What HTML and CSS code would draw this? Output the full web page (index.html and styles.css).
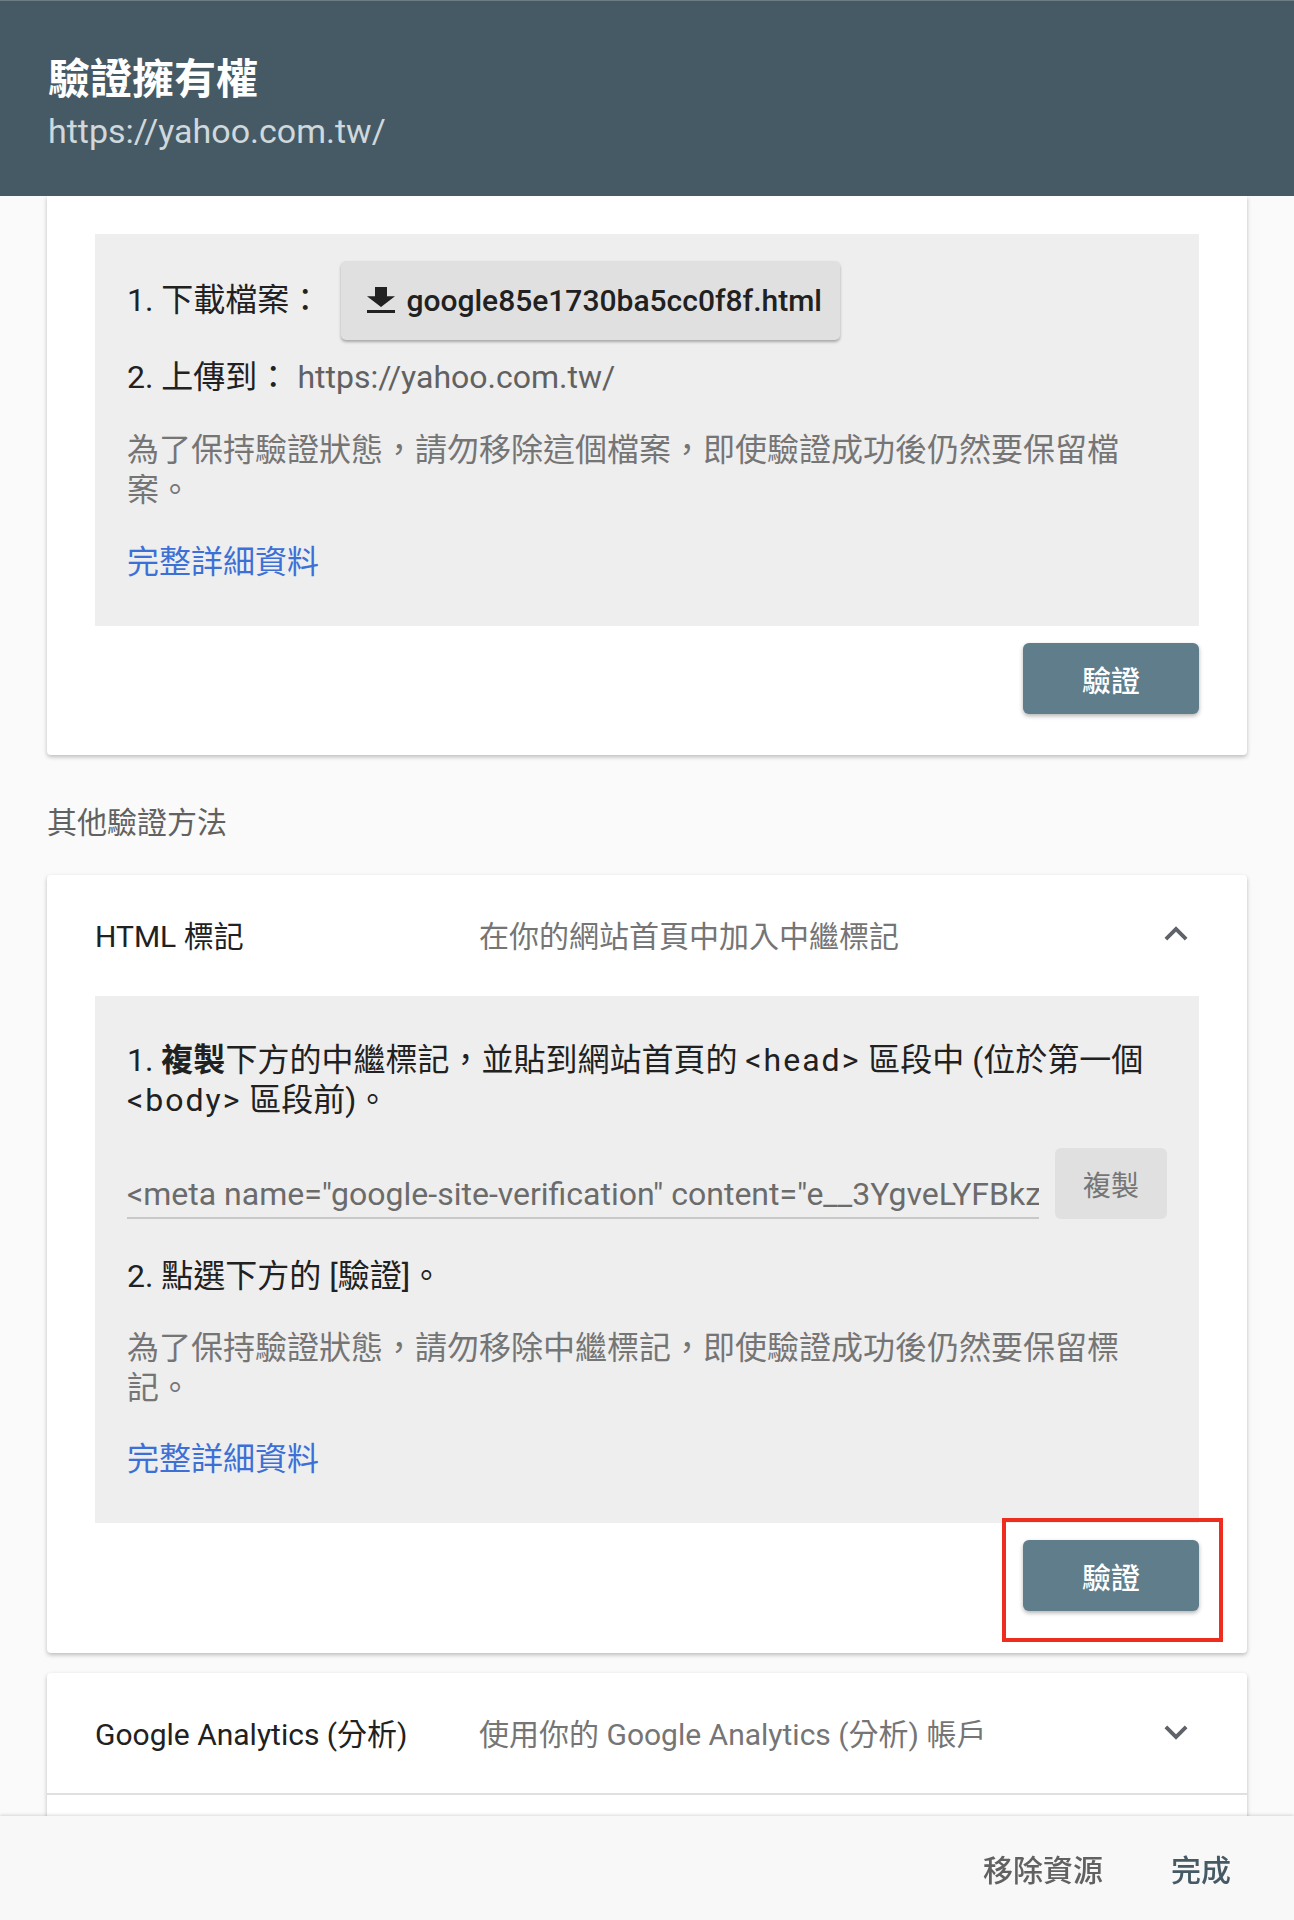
FILE: index.html
```html
<!DOCTYPE html>
<html lang="zh-Hant">
<head>
  <meta charset="utf-8">
  <title>驗證擁有權</title>
  <link rel="stylesheet" href="styles.css">
</head>
<body>
  <header class="dialog-header">
    <h1 class="dialog-title">驗證擁有權</h1>
    <div class="dialog-url">https://yahoo.com.tw/</div>
  </header>

  <main class="content">
    <!-- 建議的方法：HTML 檔案 -->
    <section class="card card-first">
      <div class="steps steps-file">
        <div class="step-row">
          <span>1. 下載檔案：</span>
          <button class="btn-download">
            <svg class="icon-download" viewBox="5 3 14 17" preserveAspectRatio="none">
              <path d="M19 9h-4V3H9v6H5l7 7 7-7zM5 18v2h14v-2H5z"/>
            </svg>
            google85e1730ba5cc0f8f.html
          </button>
        </div>
        <div class="step-line step-upload">2. 上傳到：<span class="muted-url">https://yahoo.com.tw/</span></div>
        <p class="note">為了保持驗證狀態，請勿移除這個檔案，即使驗證成功後仍然要保留檔案。</p>
        <a class="details" href="#">完整詳細資料</a>
      </div>
      <div class="actions">
        <button class="btn-verify">驗證</button>
      </div>
    </section>

    <h2 class="section-title">其他驗證方法</h2>

    <section class="card method">
      <div class="method-head">
        <span class="method-name">HTML 標記</span>
        <span class="method-desc">在你的網站首頁中加入中繼標記</span>
        <svg class="chevron" viewBox="0 0 24 24"><path d="M12 8l-6 6 1.41 1.41L12 10.83l4.59 4.58L18 14z"/></svg>
      </div>
      <div class="steps steps-tag">
        <p class="step-text">1. <b>複製</b>下方的中繼標記，並貼到網站首頁的 <span class="tag">&lt;head&gt;</span> 區段中 (位於第一個 <span class="tag">&lt;body&gt;</span> 區段前)。</p>
        <div class="copy-row">
          <input class="meta-input" type="text" readonly value='<meta name="google-site-verification" content="e__3YgveLYFBkzQ8mTr1pW7uJdN2hKcVb5sLgA4oE" />'>
          <button class="btn-copy">複製</button>
        </div>
        <div class="step-line step-click">2. 點選下方的 [驗證]。</div>
        <p class="note">為了保持驗證狀態，請勿移除中繼標記，即使驗證成功後仍然要保留標記。</p>
        <a class="details" href="#">完整詳細資料</a>
      </div>
      <div class="actions">
        <span class="highlight">
          <button class="btn-verify">驗證</button>
        </span>
      </div>
    </section>

    <section class="card method method-collapsed">
      <div class="method-head">
        <span class="method-name">Google Analytics (分析)</span>
        <span class="method-desc">使用你的 Google Analytics (分析) 帳戶</span>
        <svg class="chevron" viewBox="0 0 24 24"><path d="M16.59 8.59L12 13.17 7.41 8.59 6 10l6 6 6-6z"/></svg>
      </div>
      <div class="method-head method-next">
        <span class="method-name">Google 代碼管理工具</span>
        <span class="method-desc">使用你的 Google 代碼管理工具帳戶</span>
      </div>
    </section>
  </main>

  <footer class="dialog-footer">
    <button class="btn-text">移除資源</button>
    <button class="btn-text btn-done">完成</button>
  </footer>
</body>
</html>
```

FILE: styles.css
```css
body {
  margin: 0;
  background-color: #fafafa;
  font-family: Roboto, "Noto Sans CJK TC", sans-serif;
  color: #212121;
}

button {
  font-family: inherit;
  border: none;
  cursor: pointer;
}

/* 頂部標題列 */
.dialog-header {
  position: relative;
  z-index: 2;
  height: 196px;
  box-sizing: border-box;
  padding: 55px 48px 0;
  background-color: #465a65;
  border-top: 1px solid #6d7c85;
}

.dialog-title {
  margin: -1px 0 0;
  font-size: 42px;
  line-height: 50px;
  font-weight: 700;
  color: #ffffff;
}

.dialog-url {
  margin-top: 6px;
  font-size: 34px;
  line-height: 40px;
  color: #cfd8dc;
}

.content {
  padding: 0 47px;
  height: 1724px;
  overflow: hidden;
}

.card {
  background-color: #ffffff;
  border-radius: 0 0 4px 4px;
  box-shadow: 0 2px 4px rgba(0, 0, 0, 0.25);
}

.card-first {
  padding: 38px 48px 41px;
}

.method {
  padding: 0 48px 42px;
  border-radius: 4px;
}

.method-collapsed {
  margin-top: 20px;
  padding-bottom: 0;
}

/* 灰底步驟區塊 */
.steps {
  background-color: #eeeeee;
  padding: 26px 50px 44px 32px;
  font-size: 32px;
  line-height: 40px;
}

.steps-tag {
  padding-top: 44px;
}

.step-row {
  display: flex;
  align-items: center;
  height: 80px;
}

.step-line {
  height: 40px;
}

.step-upload {
  margin-top: 17px;
}

.muted-url {
  margin-left: 8px;
  color: #616161;
}

.btn-download {
  display: flex;
  align-items: center;
  height: 79px;
  margin-left: 20px;
  padding: 0 18px 0 26px;
  background-color: #e0e0e0;
  border-radius: 5px;
  box-shadow: 0 2px 3px rgba(0, 0, 0, 0.3);
  font-size: 30px;
  font-weight: 500;
  color: #212121;
}

.icon-download {
  width: 28px;
  height: 26px;
  margin-right: 11px;
  fill: #212121;
}

.note {
  margin: 33px 0 0;
  color: #757575;
}

.details {
  display: block;
  margin-top: 32px;
  color: #3d70d6;
  text-decoration: none;
}

.step-text {
  margin: 0;
}

.step-text b {
  font-weight: 700;
}

.tag {
  letter-spacing: 2px;
}

.copy-row {
  display: flex;
  align-items: flex-end;
  gap: 16px;
  margin-top: 28px;
}

.meta-input {
  flex: 1;
  min-width: 0;
  height: 46px;
  padding: 0;
  border: none;
  border-bottom: 2px solid #c8c8c8;
  background: transparent;
  font-family: inherit;
  font-size: 32px;
  color: #6b6b6b;
  outline: none;
}

.btn-copy {
  width: 112px;
  height: 71px;
  margin-right: -18px;
  background-color: #e0e0e0;
  border-radius: 6px;
  font-size: 28px;
  color: #757575;
}

.step-click {
  margin-top: 37px;
}

.steps-tag .note {
  margin-top: 32px;
}

.steps-tag .details {
  margin-top: 31px;
}

/* 驗證按鈕 */
.actions {
  display: flex;
  justify-content: flex-end;
  margin-top: 17px;
}

.btn-verify {
  width: 176px;
  height: 71px;
  background-color: #607d8b;
  border-radius: 6px;
  box-shadow: 0 2px 4px rgba(0, 0, 0, 0.3);
  font-size: 29px;
  font-weight: 500;
  color: #ffffff;
}

.highlight {
  position: relative;
  display: block;
}

.highlight::after {
  content: "";
  position: absolute;
  left: -21px;
  right: -24px;
  top: -22px;
  bottom: -31px;
  border: 4px solid #ee2d1f;
  pointer-events: none;
}

.section-title {
  margin: 48px 0 32px;
  font-size: 30px;
  line-height: 40px;
  font-weight: 400;
  color: #616161;
}

/* 其他方法標題列 */
.method-head {
  display: grid;
  grid-template-columns: 384px 1fr 46px;
  align-items: center;
  height: 121px;
  box-sizing: border-box;
  padding-bottom: 3px;
  font-size: 30px;
}

.method-collapsed .method-head {
  height: 120px;
}

.method-next {
  border-top: 2px solid #e0e0e0;
  margin: 0 -48px;
  padding: 0 48px;
}

.method-desc {
  color: #757575;
}

.chevron {
  width: 46px;
  height: 46px;
  fill: #5f6368;
}

/* 底部按鈕列 */
.dialog-footer {
  position: fixed;
  left: 0;
  right: 0;
  bottom: 0;
  z-index: 3;
  display: flex;
  justify-content: flex-end;
  align-items: center;
  gap: 36px;
  height: 104px;
  padding-right: 47px;
  background-color: #f8f8f8;
  box-shadow: 0 -1px 3px rgba(0, 0, 0, 0.15);
}

.btn-text {
  padding: 0 16px;
  background: none;
  font-size: 30px;
  font-weight: 500;
  color: #616161;
}

.btn-done {
  color: #455a64;
}
```
